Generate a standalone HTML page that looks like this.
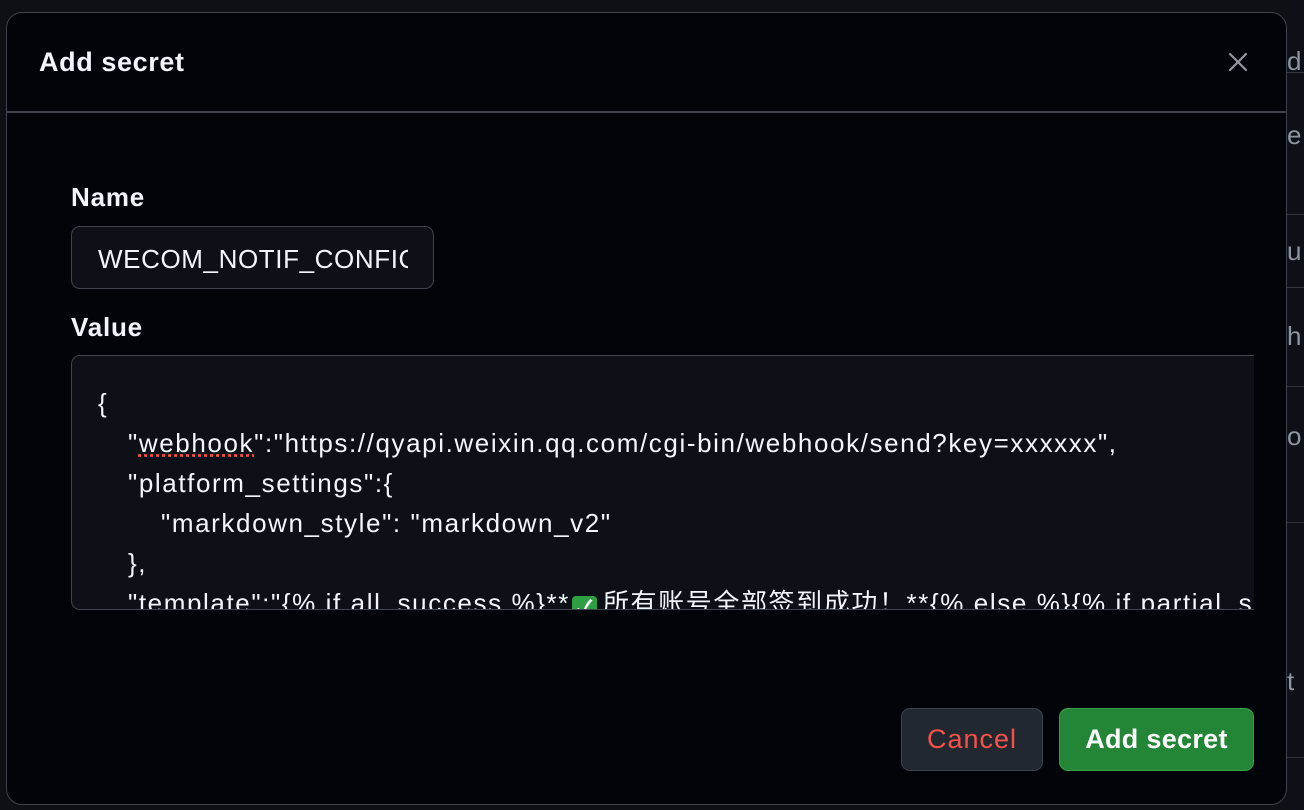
<!DOCTYPE html>
<html><head><meta charset="utf-8"><style>
*{box-sizing:border-box;margin:0;padding:0}
body{width:1304px;height:810px;background:#0d1015;overflow:hidden;position:relative;font-family:"Liberation Sans","Noto Sans CJK SC",sans-serif;color:#f0f6fc}
.side{position:absolute;left:1287px;top:0;width:17px;height:810px;background:#0d1117}
.side div{position:absolute;left:0;width:17px;height:1px;background:#30363d}
.side span{position:absolute;left:0px;color:#8d96a0;font-size:26px}
.modal{position:absolute;left:6px;top:12px;width:1281px;height:793px;background:#010409;border:1.5px solid #3d444d;border-radius:16px;overflow:hidden}
.title{position:absolute;left:32px;top:34px;font-size:27px;font-weight:bold;letter-spacing:0.6px}
.x{position:absolute;left:1220px;top:38px}
.hr{position:absolute;left:0;top:98px;width:100%;height:1.5px;background:#3d444d}
.lbl{position:absolute;left:64px;font-size:26px;font-weight:bold;letter-spacing:0.8px}
.inp{position:absolute;left:64px;top:213px;width:363px;height:63px;background:#0d1117;border:1.5px solid #3d444d;border-radius:9px;overflow:hidden;font-size:26px;letter-spacing:0.6px;padding:17px 0 0 26px;white-space:nowrap}
.inp span{display:block;width:310px;overflow:hidden}
.ta{position:absolute;left:64px;top:342px;width:1183px;height:255px;background:#0d1117;border:1.5px solid #3d444d;border-right:none;border-radius:9px 0 0 9px;overflow:hidden;font-size:26px;letter-spacing:1.6px;line-height:40px;padding:27px 0 0 26px;white-space:pre}
.i1{display:inline-block;width:30px}.i2{display:inline-block;width:63px}
.btn{position:absolute;top:695px;height:63px;border-radius:9px;font-size:27px;letter-spacing:1px;text-align:center;line-height:60px}
.cancel{left:894px;width:142px;background:#212830;border:1.5px solid #3d444d;color:#f85149}
.add{left:1052px;width:195px;background:#238636;border:1.5px solid #3c9c4c;color:#fff;font-weight:bold;letter-spacing:0.3px}
.chk{display:inline-block;width:25px;height:26px;background:#2ea043;border-radius:4px;color:#fff;font-size:22px;font-weight:bold;line-height:26px;text-align:center;vertical-align:-4px;letter-spacing:0;margin:0 6px 0 2px}
</style></head><body>
<div class="side">
<div style="top:72px"></div><div style="top:214px"></div><div style="top:287px"></div><div style="top:386px"></div><div style="top:522px"></div><div style="top:757px"></div>
<span style="top:46px">d</span><span style="top:120px">e</span><span style="top:236px">u</span><span style="top:321px">h</span><span style="top:421px">o</span><span style="top:666px">t</span>
</div>
<div class="modal">
<div class="title">Add secret</div>
<svg class="x" width="22" height="22" viewBox="0 0 22 22"><path d="M3 3L19 19M19 3L3 19" stroke="#9198a1" stroke-width="2.2" stroke-linecap="round"/></svg>
<div class="hr"></div>
<div class="lbl" style="top:169px">Name</div>
<div class="inp"><span>WECOM_NOTIF_CONFIG</span></div>
<div class="lbl" style="top:299px">Value</div>
<div class="ta">{
<span class="i1"></span>"<span style="text-decoration:underline dotted #f85149">webhook</span>":"https://qyapi.weixin.qq.com/cgi-bin/webhook/send?key=xxxxxx",
<span class="i1"></span>"platform_settings":{
<span class="i2"></span>"markdown_style": "markdown_v2"
<span class="i1"></span>},
<span class="i1"></span>"template":"{% if all_success %}**<span class="chk">✓</span>所有账号全部签到成功！**{% else %}{% if partial_success %}</div>
<div class="btn cancel">Cancel</div>
<div class="btn add">Add secret</div>
</div>
</body></html>
